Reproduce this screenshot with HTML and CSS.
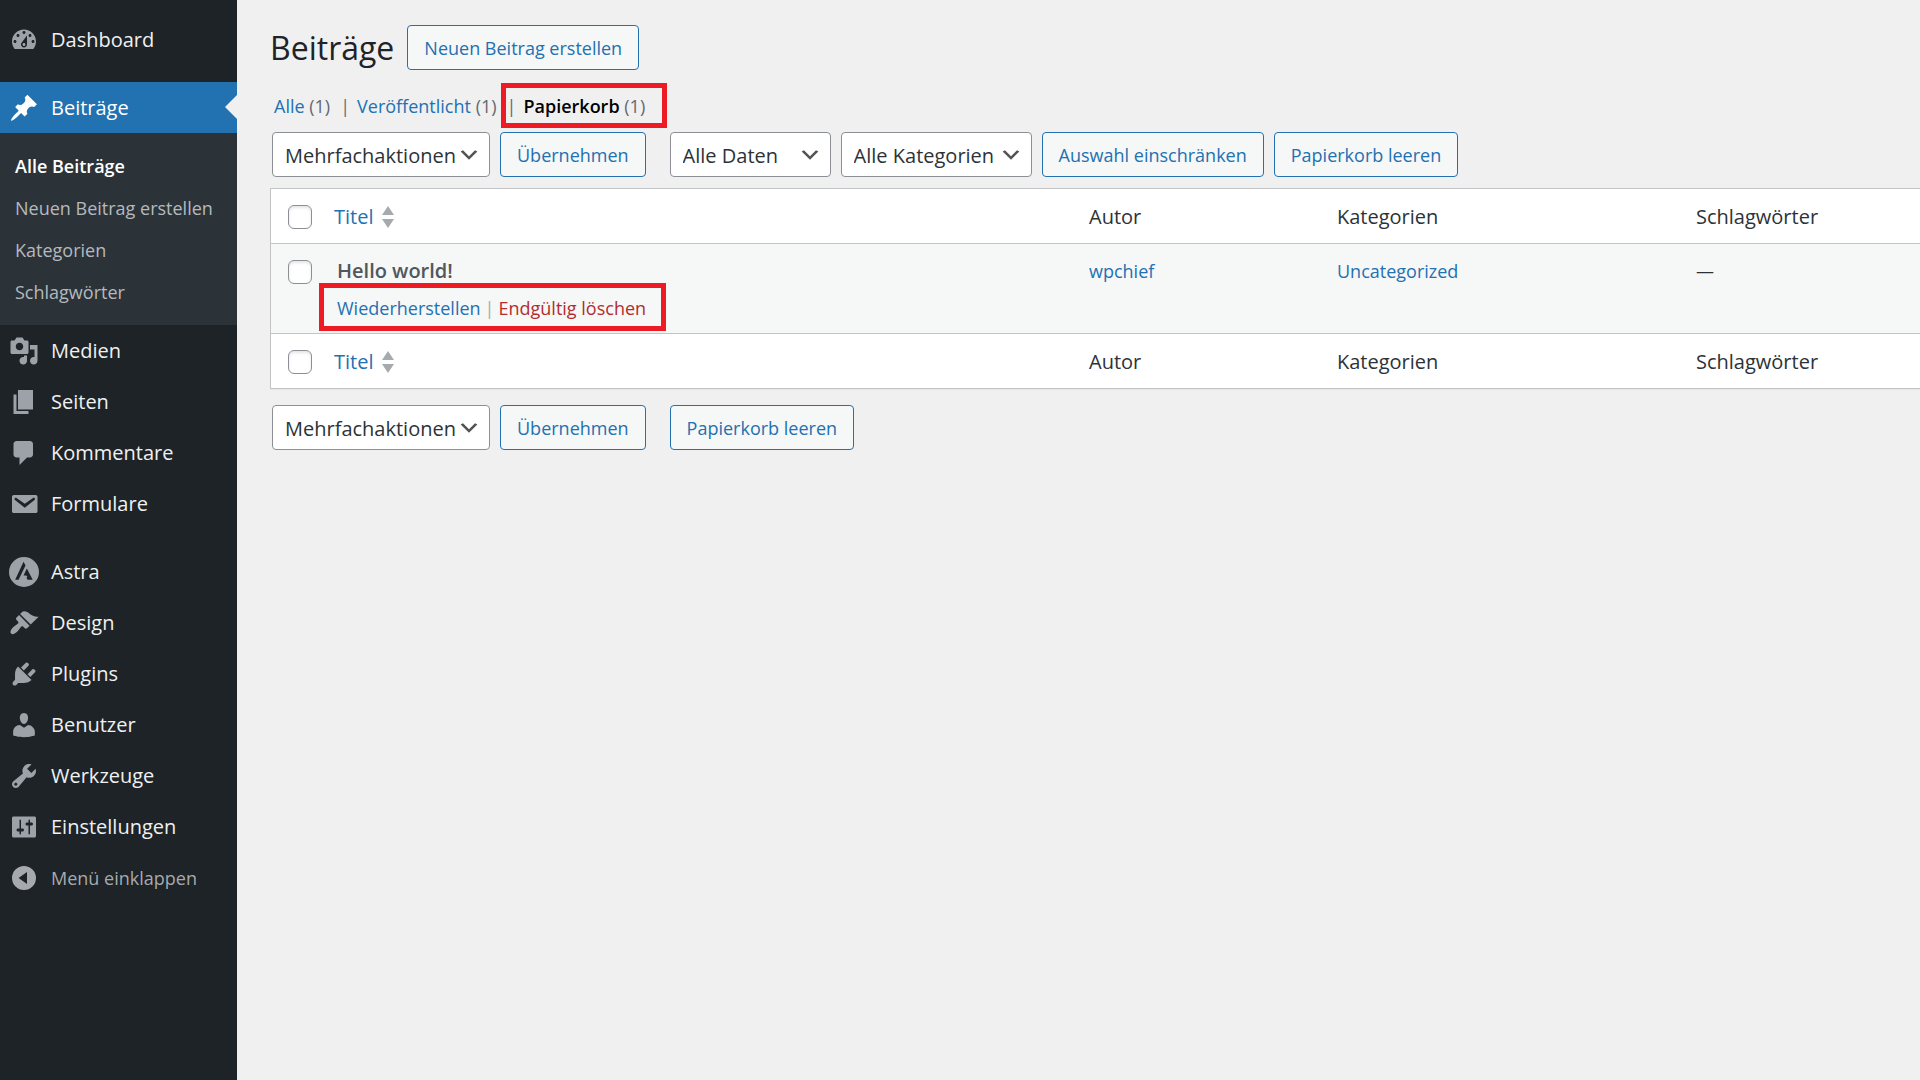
FILE: index.html
```html
<!DOCTYPE html>
<html lang="de">
<head>
<meta charset="utf-8">
<title>Beiträge</title>
<link rel="stylesheet" href="styles.css">
</head>
<body>
<div class="admin">
  <nav class="sidebar">
    <ul class="menu">
      <li><a class="menu-link" href="#"><svg class="icon" viewBox="0 0 20 20"><path d="M3.76 16h12.48c1.1-1.37 1.76-3.11 1.76-5 0-4.42-3.58-8-8-8s-8 3.58-8 8c0 1.89.66 3.63 1.76 5zM10 4c.55 0 1 .45 1 1s-.45 1-1 1-1-.45-1-1 .45-1 1-1zM6 6c.55 0 1 .45 1 1s-.45 1-1 1-1-.45-1-1 .45-1 1-1zm8 0c.55 0 1 .45 1 1s-.45 1-1 1-1-.45-1-1 .45-1 1-1zm-5.37 5.55L12 7v6c0 1.1-.9 2-2 2s-2-.9-2-2c0-.57.24-1.08.63-1.45zM4 10c.55 0 1 .45 1 1s-.45 1-1 1-1-.45-1-1 .45-1 1-1zm12 0c.55 0 1 .45 1 1s-.45 1-1 1-1-.45-1-1 .45-1 1-1zm-5 3c0-.55-.45-1-1-1s-1 .45-1 1 .45 1 1 1 1-.45 1-1z"/></svg>Dashboard</a></li>
    </ul>
    <ul class="menu">
      <li>
        <a class="menu-link current" href="#"><svg class="icon" viewBox="0 0 20 20"><path d="M10.44 3.02l1.82-1.82 6.36 6.35-1.83 1.82c-1.05-.68-2.48-.57-3.41.36l-.75.75c-.92.93-1.04 2.35-.35 3.41l-1.83 1.82-2.41-2.41-2.8 2.79c-.42.42-3.38 2.71-3.8 2.29s1.86-3.39 2.28-3.81l2.79-2.79L4.1 9.36l1.83-1.82c1.05.69 2.48.57 3.4-.36l.75-.75c.93-.92 1.05-2.35.36-3.41z"/></svg>Beiträge</a>
        <ul class="submenu">
          <li><a class="sub-link active" href="#">Alle Beiträge</a></li>
          <li><a class="sub-link" href="#">Neuen Beitrag erstellen</a></li>
          <li><a class="sub-link" href="#">Kategorien</a></li>
          <li><a class="sub-link" href="#">Schlagwörter</a></li>
        </ul>
      </li>
      <li><a class="menu-link" href="#"><svg class="icon" viewBox="0 0 20 20"><path d="M13 11V4c0-.55-.45-1-1-1h-1.67L9 1H5L3.67 3H2c-.55 0-1 .45-1 1v7c0 .55.45 1 1 1h10c.55 0 1-.45 1-1zM7 4.5c1.38 0 2.5 1.12 2.5 2.5S8.38 9.5 7 9.5 4.5 8.38 4.5 7 5.62 4.5 7 4.5zM14 6h5v10.5c0 1.38-1.12 2.5-2.5 2.5S14 17.88 14 16.5s1.12-2.5 2.5-2.5c.17 0 .34.02.5.05V9h-3V6zm-4 8.05V13h2v3.5c0 1.38-1.12 2.5-2.5 2.5S7 17.88 7 16.5 8.12 14 9.5 14c.17 0 .34.02.5.05z"/></svg>Medien</a></li>
      <li><a class="menu-link" href="#"><svg class="icon" viewBox="0 0 20 20"><path d="M6 15V2h10v13H6zm-1 1h8v2H3V5h2v11z"/></svg>Seiten</a></li>
      <li><a class="menu-link" href="#"><svg class="icon" viewBox="0 0 20 20"><path d="M5 2h9c1.1 0 2 .9 2 2v7c0 1.1-.9 2-2 2h-2l-5 5v-5H5c-1.1 0-2-.9-2-2V4c0-1.1.9-2 2-2z"/></svg>Kommentare</a></li>
      <li><a class="menu-link" href="#"><svg class="icon" viewBox="0 0 20 20"><path d="M3.2 4h14.6c.7 0 1.2.5 1.2 1.2v9.6c0 .7-.5 1.2-1.2 1.2H3.2c-.7 0-1.2-.5-1.2-1.2V5.2C2 4.5 2.5 4 3.200 4zm7.300 8.500L17 7.400c.4-.4.500-.9.100-1.300-.3-.3-.8-.3-1.100-.1l-5.500 3.900L5 6c-.3-.2-.8-.2-1.100.1-.4.4-.3.900.1 1.300z"/></svg>Formulare</a></li>
    </ul>
    <ul class="menu">
      <li><a class="menu-link" href="#"><svg class="icon" viewBox="0 0 20 20"><path fill-rule="evenodd" d="M10 0a10 10 0 1 1 0 20 10 10 0 0 1 0-20zM9.700 3.100L4.100 15.200h2.300l4.600-9.600zM11.900 7.600l-2.200 4.700h1.800l.9 1.100-.8.200.8 1.600h3.400z"/></svg>Astra</a></li>
      <li><a class="menu-link" href="#"><svg class="icon" viewBox="0 0 20 20"><path d="M14.480 11.060L7.410 3.990l1.500-1.500c.5-.56 2.300-.47 3.510.32 1.210.8 1.430 1.280 2.910 2.100 1.180.64 2.450 1.260 4.450.85zm-.71.71L6.700 4.700 4.930 6.470c-.39.39-.39 1.020 0 1.410l1.060 1.060c.39.39.39 1.030 0 1.420-.6.6-1.430 1.110-2.210 1.690-.35.26-.7.53-1.010.84C1.430 14.230.4 16.080 1.400 17.070c.99 1 2.840-.03 4.180-1.360.31-.31.58-.66.85-1.020.57-.78 1.080-1.610 1.690-2.210.39-.39 1.020-.39 1.410 0l1.060 1.060c.39.39 1.020.39 1.410 0z"/></svg>Design</a></li>
      <li><a class="menu-link" href="#"><svg class="icon" viewBox="0 0 20 20"><path d="M13.110 4.360L9.870 7.600 8 5.730l3.240-3.240c.35-.34 1.050-.2 1.560.32.52.51.66 1.210.31 1.550zm-8 1.770l.91-1.120 9.010 9.010-1.190.84c-.71.71-2.630 1.160-3.820 1.160H6.140L4.900 17.260c-.59.59-1.540.59-2.120 0-.59-.58-.59-1.530 0-2.120l1.240-1.240v-3.880c0-1.130.4-3.190 1.090-3.890zm7.260 3.970l3.240-3.240c.34-.35 1.040-.21 1.550.31.52.51.66 1.210.31 1.550l-3.240 3.250z"/></svg>Plugins</a></li>
      <li><a class="menu-link" href="#"><svg class="icon" viewBox="0 0 20 20"><path d="M10 9.250c-2.270 0-2.730-3.440-2.730-3.440C7 4.020 7.820 2 9.970 2c2.160 0 2.980 2.020 2.710 3.810 0 0-.41 3.440-2.680 3.440zm0 2.570L12.720 10c2.390 0 4.520 2.330 4.520 4.530v2.490s-3.650 1.130-7.240 1.130c-3.650 0-7.240-1.130-7.240-1.130v-2.490c0-2.250 1.940-4.480 4.470-4.480z"/></svg>Benutzer</a></li>
      <li><a class="menu-link" href="#"><svg class="icon" viewBox="0 0 20 20"><path d="M16.680 9.770c-1.340 1.340-3.300 1.670-4.950.99l-5.410 6.520c-.99.99-2.590.99-3.580 0s-.99-2.590 0-3.570l6.520-5.420c-.68-1.650-.35-3.610.99-4.950 1.280-1.280 3.120-1.620 4.720-1.060l-2.890 2.890 2.820 2.820 2.860-2.870c.53 1.580.18 3.390-1.080 4.650zM3.810 16.210c.4.39 1.040.39 1.430 0 .4-.4.4-1.040 0-1.430-.39-.4-1.030-.4-1.430 0-.39.39-.39 1.030 0 1.430z"/></svg>Werkzeuge</a></li>
      <li><a class="menu-link" href="#"><svg class="icon" viewBox="0 0 20 20"><path d="M18 16V4c0-.55-.45-1-1-1H3c-.55 0-1 .45-1 1v12c0 .55.45 1 1 1h14c.55 0 1-.45 1-1zM8 11h1c.55 0 1 .45 1 1s-.45 1-1 1H8v1.500c0 .28-.22.5-.5.5s-.5-.22-.5-.5V13H6c-.55 0-1-.45-1-1s.45-1 1-1h1V5.500c0-.28.22-.5.5-.5s.5.22.5.5V11zm5-2h-1c-.55 0-1-.45-1-1s.45-1 1-1h1V5.500c0-.28.22-.5.5-.5s.5.22.5.5V7h1c.55 0 1 .45 1 1s-.45 1-1 1h-1v5.500c0 .28-.22.5-.5.5s-.5-.22-.5-.5V9z"/></svg>Einstellungen</a></li>
    </ul>
    <button class="collapse" type="button"><svg class="icon" viewBox="0 0 20 20"><path fill-rule="evenodd" d="M10 2a8 8 0 1 1 0 16 8 8 0 0 1 0-16zM12 6l-5.600 4 5.600 4z"/></svg>Menü einklappen</button>
  </nav>

  <main class="content">
    <header class="page-head">
      <h1>Beiträge</h1>
      <a class="button" href="#">Neuen Beitrag erstellen</a>
    </header>

    <ul class="views">
      <li><a href="#">Alle</a> <span class="count">(1)</span></li>
      <li><span class="bar">|</span><a href="#">Veröffentlicht</a> <span class="count">(1)</span></li>
      <li class="marked"><span class="bar">|</span><a class="active" href="#">Papierkorb</a> <span class="count">(1)</span></li>
    </ul>

    <div class="toolbar">
      <div class="tools">
        <select class="select bulk" aria-label="Mehrfachaktion wählen"><option>Mehrfachaktionen</option></select>
        <button class="button" type="button">Übernehmen</button>
      </div>
      <div class="tools">
        <select class="select dates" aria-label="Nach Datum filtern"><option>Alle Daten</option></select>
        <select class="select cats" aria-label="Nach Kategorie filtern"><option>Alle Kategorien</option></select>
        <button class="button" type="button">Auswahl einschränken</button>
        <button class="button" type="button">Papierkorb leeren</button>
      </div>
    </div>

    <table class="posts">
      <colgroup><col class="col-check"><col><col class="col-author"><col class="col-cats"><col class="col-tags"></colgroup>
      <thead>
        <tr>
          <td class="check"><input type="checkbox" aria-label="Alle auswählen"></td>
          <th scope="col"><a class="sort" href="#">Titel<svg viewBox="0 0 12 22"><path d="M6 0l6 9H0zM6 22l6-9H0z"/></svg></a></th>
          <th scope="col">Autor</th>
          <th scope="col">Kategorien</th>
          <th scope="col">Schlagwörter</th>
        </tr>
      </thead>
      <tbody>
        <tr>
          <td class="check"><input type="checkbox" aria-label="Hello world! auswählen"></td>
          <td class="title">
            <strong>Hello world!</strong>
            <div class="actions marked"><a href="#">Wiederherstellen</a><span class="bar">|</span><a class="delete" href="#">Endgültig löschen</a></div>
          </td>
          <td><a href="#">wpchief</a></td>
          <td><a href="#">Uncategorized</a></td>
          <td>—</td>
        </tr>
      </tbody>
      <tfoot>
        <tr>
          <td class="check"><input type="checkbox" aria-label="Alle auswählen"></td>
          <th scope="col"><a class="sort" href="#">Titel<svg viewBox="0 0 12 22"><path d="M6 0l6 9H0zM6 22l6-9H0z"/></svg></a></th>
          <th scope="col">Autor</th>
          <th scope="col">Kategorien</th>
          <th scope="col">Schlagwörter</th>
        </tr>
      </tfoot>
    </table>

    <div class="toolbar bottom">
      <div class="tools">
        <select class="select bulk" aria-label="Mehrfachaktion wählen"><option>Mehrfachaktionen</option></select>
        <button class="button" type="button">Übernehmen</button>
      </div>
      <div class="tools">
        <button class="button" type="button">Papierkorb leeren</button>
      </div>
    </div>
  </main>
</div>
</body>
</html>
```
FILE: styles.css
```css
* {
  box-sizing: border-box;
}

body {
  margin: 0;
  background: #f0f0f1;
  color: #2c3338;
  font: 18px/30px "Segoe UI", "Open Sans", sans-serif;
}

a {
  color: #2271b1;
  text-decoration: none;
}

ul {
  margin: 0;
  padding: 0;
  list-style: none;
}

.admin {
  display: flex;
  min-height: 100vh;
}

/* Sidebar */
.sidebar {
  flex: 0 0 237px;
  min-width: 0;
  padding-top: 14px;
  background: #1d2327;
}

.menu + .menu {
  margin-top: 17px;
}

.menu-link,
.collapse {
  display: flex;
  align-items: center;
  gap: 12px;
  width: 100%;
  height: 51px;
  padding: 0 9px;
  color: #f0f0f1;
  font-size: 20px;
}

.icon {
  flex: none;
  width: 30px;
  height: 30px;
  fill: #9ca2a7;
}

.current {
  position: relative;
  background: #2271b1;
  color: #fff;
}

.current .icon {
  fill: #fff;
}

.current::after {
  content: "";
  position: absolute;
  top: 13px;
  right: 0;
  border: 12px solid transparent;
  border-left: 0;
  border-right-color: #f0f0f1;
}

.submenu {
  padding: 12px 0;
  background: #2c3338;
}

.sub-link {
  display: block;
  padding: 6px 15px;
  color: #b4b9be;
  white-space: nowrap;
}

.sub-link.active {
  color: #fff;
  font-weight: 600;
}

.collapse {
  border: 0;
  background: none;
  color: #a7aaad;
  font-family: inherit;
  font-size: 18px;
}

.collapse .icon {
  fill: #a7aaad;
}

/* Content */
.content {
  flex: 1;
  min-width: 0;
  padding: 25px 0 0 33px;
}

.page-head {
  display: flex;
  align-items: center;
  gap: 13px;
}

h1 {
  margin: 0;
  color: #1d2327;
  font-size: 32px;
  font-weight: 400;
  line-height: 45px;
}

.button {
  height: 45px;
  padding: 1px 16px 0;
  border: 1px solid #2271b1;
  border-radius: 4px;
  background: #f6f7f7;
  color: #2271b1;
  font-family: inherit;
  font-size: 18px;
  line-height: 42px;
  white-space: nowrap;
}

.views {
  display: flex;
  gap: 10px;
  padding: 21px 0 11px 4px;
}

.views .bar {
  margin-right: 7px;
}

.bar,
.count {
  color: #646970;
}

.views .active {
  color: #000;
  font-weight: 600;
}

.marked {
  position: relative;
}

.marked::after {
  content: "";
  position: absolute;
  border: 5px solid #ed1c24;
  pointer-events: none;
}

.views .marked::after {
  inset: -8px -22px -7px -6px;
}

.toolbar {
  display: flex;
  gap: 24px;
  padding-left: 2px;
}

.bottom {
  margin-top: 16px;
}

.tools {
  display: flex;
  gap: 10px;
}

.select {
  height: 45px;
  padding: 1px 32px 0 12px;
  border: 1px solid #8c8f94;
  border-radius: 4px;
  appearance: none;
  background: #fff url('data:image/svg+xml,<svg xmlns="http://www.w3.org/2000/svg" viewBox="0 0 20 20"><path fill="%23555" d="M5 6l5 5 5-5 2 1-7 7-7-7z"/></svg>') no-repeat right 8px center / 24px 24px;
  color: #2c3338;
  font-family: inherit;
  font-size: 20px;
}

.bulk {
  width: 218px;
}

.dates {
  width: 161px;
}

.cats {
  width: 191px;
}

/* Posts table */
.posts {
  width: 100%;
  margin-top: 11px;
  table-layout: fixed;
  border: 1px solid #c3c4c7;
  border-right: 0;
  border-spacing: 0;
  background: #fff;
  box-shadow: 0 1px 1px rgba(0, 0, 0, 0.04);
}

.col-check {
  width: 50px;
}

.col-author {
  width: 248px;
}

.col-cats {
  width: 359px;
}

.col-tags {
  width: 236px;
}

.posts th,
.posts td {
  padding: 12px;
  font-weight: 400;
  text-align: left;
  vertical-align: top;
}

.posts th {
  padding: 13px 12px 11px;
  font-size: 20px;
}

thead th,
thead td,
tbody td {
  border-bottom: 1px solid #c3c4c7;
}

tbody tr {
  background: #f6f7f7;
}

.posts .check {
  padding: 16px 0 0 17px;
  line-height: 0;
}

input[type="checkbox"] {
  width: 24px;
  height: 24px;
  margin: 0;
  border: 1px solid #8c8f94;
  border-radius: 6px;
  appearance: none;
  background: #fff;
  box-shadow: inset 0 2px 3px rgba(0, 0, 0, 0.1);
}

.sort {
  display: flex;
  align-items: center;
  gap: 9px;
  padding-left: 1px;
}

.sort svg {
  width: 12px;
  height: 22px;
  fill: #a7aaad;
}

.posts .title {
  padding: 12px 12px 10px 16px;
}

.title strong {
  color: #50575e;
  font-size: 20px;
  font-weight: 600;
}

.actions {
  width: fit-content;
  margin-top: 7px;
}

.actions .bar {
  margin: 0 4px;
  color: #a7aaad;
}

.actions.marked::after {
  inset: -10px -20px -8px -18px;
}

.delete {
  color: #b32d2e;
}
```
